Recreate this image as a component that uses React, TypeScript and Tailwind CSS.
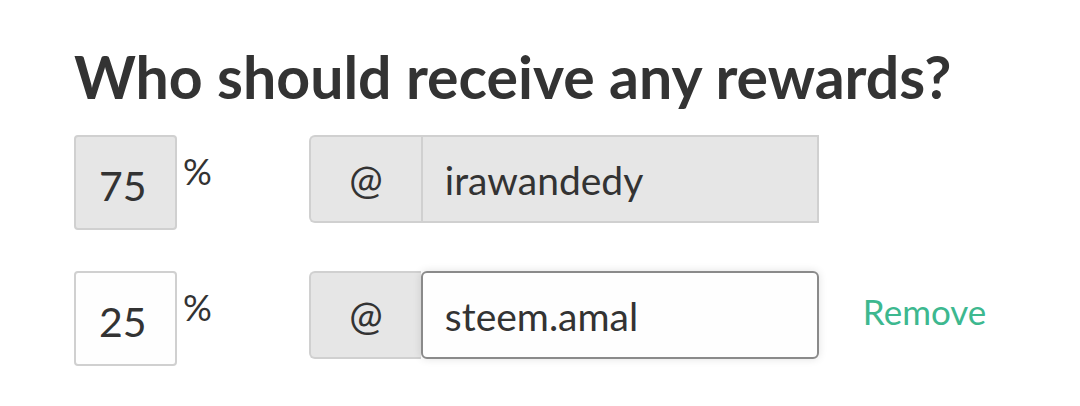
import React from "react";

const font = { fontFamily: "Lato, 'Noto Sans', sans-serif" };

function Row({ pct, name, active }: { pct: string; name: string; active?: boolean }) {
  return (
    <div className="flex items-start">
      {/* percent field */}
      <div
        className={`w-[103px] h-[95px] rounded-[4px] border-2 border-[#d0d0d0] flex items-center pl-[23px] pt-[6px] text-[41px] text-[#333] ${
          active ? "bg-[#fefefe]" : "bg-[#e6e6e6]"
        }`}
      >
        {pct}
      </div>
      <span className="ml-[6px] mt-[18px] text-[36px] leading-none text-[#333]">%</span>

      {/* @ + account */}
      <div className="ml-[97px] flex h-[88px] w-[510px]">
        <div className="w-[112px] flex items-center justify-center rounded-l-[6px] border-2 border-r-0 border-[#d0d0d0] bg-[#e6e6e6] text-[40px] text-[#333]">
          @
        </div>
        {active ? (
          <div className="flex-1 flex items-center pl-[22px] pt-[2px] rounded-[6px] border-2 border-[#8a8a8a] bg-[#fefefe] text-[39px] text-[#333] shadow-[0_0_8px_rgba(0,0,0,0.12)]">
            {name}
          </div>
        ) : (
          <div className="flex-1 flex items-center pl-[22px] pt-[2px] border-2 border-[#d0d0d0] bg-[#e6e6e6] text-[39px] text-[#333]">
            {name}
          </div>
        )}
      </div>

      {active && (
        <span className="ml-[44px] h-[88px] pb-[8px] flex items-center text-[35px] text-[#3db88f]">Remove</span>
      )}
    </div>
  );
}

export default function App() {
  return (
    <div style={font} className="w-[1080px] h-[406px] bg-white pl-[74px] pt-[41px] overflow-hidden">
      <h2 className="text-[59px] leading-[71px] font-bold text-[#333]">
        Who should receive any rewards?
      </h2>
      <div className="mt-[23px] flex flex-col gap-[41px]">
        <Row pct="75" name="irawandedy" />
        <Row pct="25" name="steem.amal" active />
      </div>
    </div>
  );
}
